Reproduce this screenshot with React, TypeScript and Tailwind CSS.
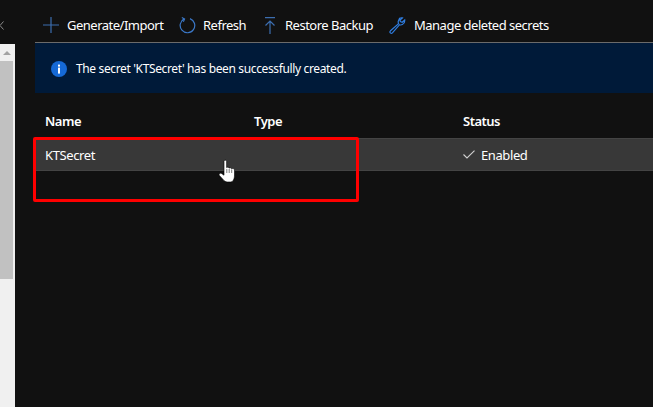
import React from "react";

const font = { fontFamily: '"Noto Sans", "Open Sans", sans-serif' };

function ToolItem({ icon, label, className }: { icon: React.ReactNode; label: string; className: string }) {
  return (
    <div className={`flex items-center ${className}`}>
      {icon}
      <span className="text-[13px] leading-[18px] text-white tracking-[-0.5px] whitespace-nowrap">{label}</span>
    </div>
  );
}

export default function App() {
  return (
    <div className="relative flex h-[407px] w-[653px] overflow-hidden bg-[#111111]" style={font}>
      <aside className="flex w-[15px] shrink-0 flex-col">
        <div className="flex h-[44px] items-start bg-[#111111] pt-[21px]">
          <svg width="4" height="9" viewBox="0 0 4 9">
            <path d="M3.5 0.5 L0 4.5 L3.5 8.5" fill="none" stroke="#8a8a8a" strokeWidth="1" />
          </svg>
        </div>
        <div className="flex flex-1 flex-col bg-[#f0f0f0] pr-[2px]">
          <div className="flex h-[17px] items-center justify-center">
            <div className="h-0 w-0 border-x-[4px] border-b-[4px] border-x-transparent border-b-[#a3a3a3]" />
          </div>
          <div className="h-[218px] bg-[#c1c1c1]" />
        </div>
      </aside>

      <main className="flex min-w-0 flex-1 flex-col">
        <div className="ml-[20px] flex h-[42px] items-center pl-[8px] pt-[9px] pb-[1px]">
          <ToolItem
            className="w-[136px]"
            label="Generate/Import"
            icon={
              <svg width="16" height="16" viewBox="0 0 16 16" className="mr-[8px]">
                <path d="M8 0 V16 M0 8 H16" stroke="#3c6eb0" strokeWidth="1.2" fill="none" />
              </svg>
            }
          />
          <ToolItem
            className="w-[85px]"
            label="Refresh"
            icon={
              <svg width="17" height="17" viewBox="0 0 17 17" className="mr-[7px]">
                <path d="M5.2 1.9 A7.3 7.3 0 1 0 11 1.6" stroke="#3b78c8" strokeWidth="1.2" fill="none" />
                <path d="M2.8 0.6 L5.6 2 L4.4 4.8" stroke="#3b78c8" strokeWidth="1.1" fill="none" />
              </svg>
            }
          />
          <ToolItem
            className="w-[125px]"
            label="Restore Backup"
            icon={
              <svg width="12" height="17" viewBox="0 0 12 17" className="mr-[9px]">
                <path d="M1 0.7 H11 M6 4 V17 M1.5 8.5 L6 4 L10.5 8.5" stroke="#3c6eb0" strokeWidth="1.2" fill="none" />
              </svg>
            }
          />
          <ToolItem
            className="w-[170px]"
            label="Manage deleted secrets"
            icon={
              <svg width="17" height="17" viewBox="0 0 17 17" className="mr-[8px]">
                <path
                  d="M10.6 1.2 L9.3 4.2 C9 5.2 9.3 6 9.6 6.6 L1.5 13.8 C0.7 14.6 0.9 15.4 1.4 15.9 C2 16.4 2.8 16.4 3.4 15.8 L10.6 7.7 C11.4 8.1 12.4 8.1 13.3 7.6 C15 6.7 15.9 5.1 15.7 3 L13.2 5.3 L11.4 4.6 L11 3 L13.4 0.9 C12.4 0.6 11.4 0.8 10.6 1.2 Z"
                  stroke="#2f7de0"
                  strokeWidth="1.2"
                  fill="none"
                />
              </svg>
            }
          />
        </div>

        <div className="ml-[20px] flex h-[51px] items-center border-t border-[#6b6b6b] bg-[#001a39] pl-[16px] pt-[1px]">
          <svg width="16" height="16" viewBox="0 0 16 16" className="mr-[9px] shrink-0">
            <circle cx="8" cy="8" r="8" fill="#1569d6" />
            <rect x="7" y="6.6" width="2" height="6" fill="#fff" />
            <rect x="7" y="3.6" width="2" height="2" fill="#fff" />
          </svg>
          <span className="text-[12px] leading-[16px] text-white tracking-[-0.36px] whitespace-nowrap">
            The secret 'KTSecret' has been successfully created.
          </span>
        </div>

        <div className="ml-[20px] flex h-[45px] items-end pb-[8px] pl-[10px] text-[13px] leading-[18px] font-semibold tracking-[-0.5px] text-white">
          <span className="w-[209px]">Name</span>
          <span className="w-[209px]">Type</span>
          <span>Status</span>
        </div>

        <div className="ml-[20px] flex h-[33px] items-center border-t border-b border-[#444444] bg-[#383838] pl-[10px] text-[13px] leading-[18px] text-white">
          <span className="w-[418px] pt-[1px] tracking-[-0.4px]">KTSecret</span>
          <svg width="12" height="9" viewBox="0 0 12 9" className="mr-[6px]">
            <path d="M0.5 4.5 L4 8 L11.5 0.7" stroke="#d0d0d0" strokeWidth="1.1" fill="none" />
          </svg>
          <span className="pt-[1px] tracking-[-0.4px]">Enabled</span>
        </div>
      </main>

      <div className="absolute left-[33px] top-[137px] h-[65px] w-[326px] rounded-[2px] border-[3px] border-[#ff0000]" />

      <svg width="19" height="25" viewBox="0 0 19 25" className="absolute left-[218px] top-[159px]">
        <path
          d="M6 2.2 C6 0.8 8.6 0.8 8.6 2.2 V8.6 C9.2 8 10.9 8 11.1 9.2 C11.6 8.4 13.2 8.5 13.5 9.8 C14.2 9.2 16.4 9.4 16.5 10.8 V16 C16.5 19.5 15.3 23 12.5 23 H9.5 C7.5 23 6.2 22 4.8 20.2 L1.4 16.6 C0.4 15 2 13.4 3.6 14.5 L6 16.2 Z"
          fill="#ffffff"
          stroke="#000000"
          strokeWidth="0.6"
        />
        <path d="M8.8 10 V14 M11.2 10 V14 M13.7 10.5 V14" stroke="#444" strokeWidth="0.7" fill="none" />
      </svg>
    </div>
  );
}
